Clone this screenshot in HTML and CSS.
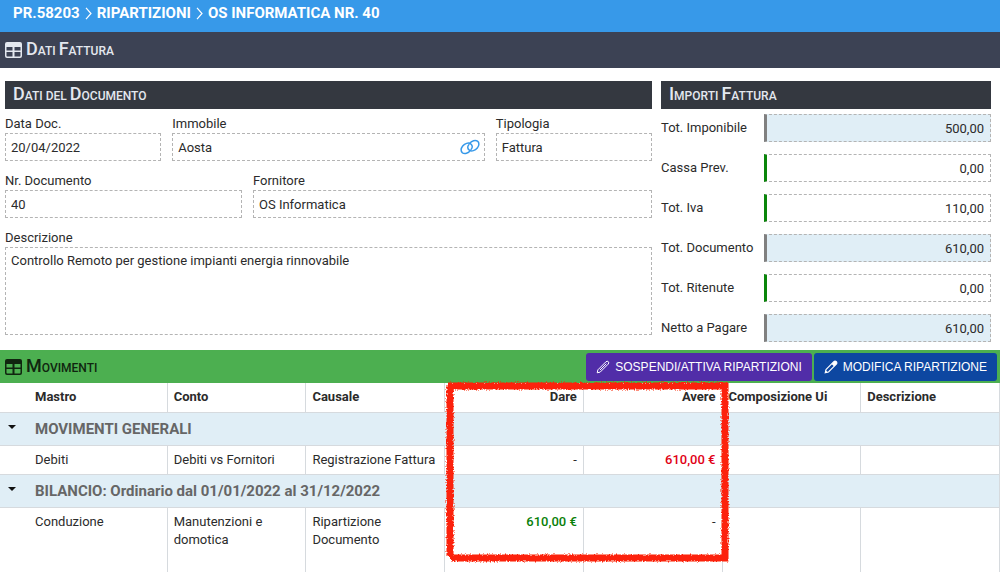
FILE: index.html
```html
<!DOCTYPE html>
<html lang="it">
<head>
<meta charset="utf-8">
<meta name="viewport" content="width=device-width, initial-scale=1">
<title>OS Informatica Nr. 40</title>
<link rel="stylesheet" href="styles.css">
</head>
<body>
<nav class="breadcrumb" aria-label="Percorso">
  <a href="#">PR.58203</a>
  <svg class="chevron" viewBox="0 0 7 13" aria-hidden="true"><path d="M1 .8 6 6.500 1 12.200"/></svg>
  <a href="#">RIPARTIZIONI</a>
  <svg class="chevron" viewBox="0 0 7 13" aria-hidden="true"><path d="M1 .8 6 6.500 1 12.200"/></svg>
  <a href="#">OS INFORMATICA NR. 40</a>
</nav>

<header class="section-bar">
  <svg class="table-icon" viewBox="0 0 17 16" aria-hidden="true"><path fill-rule="evenodd" d="M2 0h13a2 2 0 0 1 2 2v12a2 2 0 0 1-2 2H2a2 2 0 0 1-2-2V2a2 2 0 0 1 2-2zM1.500 5v3.500h6V5zm8 0v3.500h6V5zm-8 5v3.800q0 .7.7.7h5.300V10zm8 0v4.500h5.300q.7 0 .7-.7V10z"/></svg>
  <h1 class="caps"><span class="cap">D</span>ati <span class="cap">F</span>attura</h1>
</header>

<main>
  <form class="invoice">
    <section class="document">
      <h2 class="caps panel-title"><span class="cap">D</span>ati del <span class="cap">D</span>ocumento</h2>
      <div class="row row-main">
        <div class="field"><label for="data">Data Doc.</label><input class="box" id="data" value="20/04/2022"></div>
        <div class="field"><label for="immobile">Immobile</label>
          <div class="box linked"><input class="bare" id="immobile" value="Aosta">
            <button class="link-button" type="button" aria-label="Apri immobile"><svg class="link-icon" viewBox="0 0 20 16" aria-hidden="true"><path d="M10.500 11.300C8.500 14.300 4.500 15.200 2.500 13.800.5 12.300.7 9.500 2.700 7 4.800 4.400 8.500 3.300 10.700 4.800 12.700 6.200 12.600 8.500 11.300 10.100"/><path d="M9.500 4.700C11.500 1.700 15.500.8 17.500 2.200 19.500 3.700 19.300 6.500 17.300 9 15.200 11.600 11.500 12.700 9.300 11.200 7.300 9.800 7.400 7.500 8.700 5.900"/></svg></button>
          </div></div>
        <div class="field"><label for="tipologia">Tipologia</label><input class="box" id="tipologia" value="Fattura"></div>
      </div>
      <div class="row row-supplier">
        <div class="field"><label for="numero">Nr. Documento</label><input class="box" id="numero" value="40"></div>
        <div class="field"><label for="fornitore">Fornitore</label><input class="box" id="fornitore" value="OS Informatica"></div>
      </div>
      <div class="row">
        <div class="field"><label for="descrizione">Descrizione</label><textarea class="box area" id="descrizione">Controllo Remoto per gestione impianti energia rinnovabile</textarea></div>
      </div>
    </section>

    <section class="amounts">
      <h2 class="caps panel-title"><span class="cap">I</span>mporti <span class="cap">F</span>attura</h2>
      <div class="amount-list">
        <div class="amount"><label for="imponibile">Tot. Imponibile</label><input class="box number total" id="imponibile" value="500,00" readonly></div>
        <div class="amount"><label for="cassa">Cassa Prev.</label><input class="box number" id="cassa" value="0,00"></div>
        <div class="amount"><label for="iva">Tot. Iva</label><input class="box number" id="iva" value="110,00"></div>
        <div class="amount"><label for="totdoc">Tot. Documento</label><input class="box number total" id="totdoc" value="610,00" readonly></div>
        <div class="amount"><label for="ritenute">Tot. Ritenute</label><input class="box number" id="ritenute" value="0,00"></div>
        <div class="amount"><label for="netto">Netto a Pagare</label><input class="box number total" id="netto" value="610,00" readonly></div>
      </div>
    </section>
  </form>

  <section class="movements">
    <header class="section-bar green">
      <svg class="table-icon" viewBox="0 0 17 16" aria-hidden="true"><path fill-rule="evenodd" d="M2 0h13a2 2 0 0 1 2 2v12a2 2 0 0 1-2 2H2a2 2 0 0 1-2-2V2a2 2 0 0 1 2-2zM1.500 5v3.500h6V5zm8 0v3.500h6V5zm-8 5v3.800q0 .7.7.7h5.300V10zm8 0v4.500h5.300q.7 0 .7-.7V10z"/></svg>
      <h2 class="caps"><span class="cap">M</span>ovimenti</h2>
      <div class="actions">
        <button class="action purple" type="button"><svg class="pencil" viewBox="0 0 14 14" aria-hidden="true"><path class="line" d="M1.200 12.800 1.900 9.800 9.800 1.900Q11.200.6 12.300 1.700 13.400 2.800 12.100 4.200L4.200 12.100z"/><path class="line" d="M4 10 10.300 3.700"/></svg>SOSPENDI/ATTIVA RIPARTIZIONI</button>
        <button class="action blue" type="button"><svg class="pencil" viewBox="0 0 14 14" aria-hidden="true"><path class="line" d="M1.200 12.800 2 9.500 9.600 1.900Q11 .5 12.300 1.700 13.500 3 12.100 4.400L4.500 12z"/><path class="solid" d="M7.600 3.900 10 1.500Q11.200.6 12.400 1.600 13.400 2.800 12.500 4L10.100 6.400zM1 13l.7-2.800 2.100 2.100z"/></svg>MODIFICA RIPARTIZIONE</button>
      </div>
    </header>

    <div class="table-wrap">
      <table class="grid">
        <colgroup><col class="toggle-col"><col span="7"></colgroup>
        <thead>
          <tr><th class="toggle-cell"></th><th>Mastro</th><th>Conto</th><th>Causale</th><th class="right">Dare</th><th class="right">Avere</th><th>Composizione Ui</th><th>Descrizione</th></tr>
        </thead>
        <tbody>
          <tr class="group"><td class="toggle-cell"><button class="toggle" type="button" aria-label="Comprimi Movimenti generali"></button></td><th colspan="7">MOVIMENTI GENERALI</th></tr>
          <tr><td class="toggle-cell"></td><td>Debiti</td><td>Debiti vs Fornitori</td><td>Registrazione Fattura</td><td class="right">-</td><td class="right avere">610,00 €</td><td></td><td></td></tr>
          <tr class="group"><td class="toggle-cell"><button class="toggle" type="button" aria-label="Comprimi Bilancio"></button></td><th colspan="7">BILANCIO: Ordinario dal 01/01/2022 al 31/12/2022</th></tr>
          <tr class="tall"><td class="toggle-cell"></td><td>Conduzione</td><td>Manutenzioni e domotica</td><td>Ripartizione Documento</td><td class="right dare">610,00 €</td><td class="right">-</td><td></td><td></td></tr>
        </tbody>
      </table>
      <svg class="marker" viewBox="0 0 284 182" preserveAspectRatio="none" aria-hidden="true">
        <defs><filter id="chalk" x="-5%" y="-5%" width="110%" height="110%">
          <feTurbulence type="fractalNoise" baseFrequency=".73" numOctaves="1" seed="11" result="noise"/>
          <feDisplacementMap in="SourceGraphic" in2="noise" scale="4" xChannelSelector="R" yChannelSelector="G"/>
        </filter></defs>
        <path filter="url(#chalk)" d="M3 5H280V177H6M5 4V175"/>
      </svg>
    </div>
  </section>
</main>
</body>
</html>
```
FILE: styles.css
```css
* { box-sizing: border-box; }

body {
  margin: 0;
  background: #fff;
  color: #2b2b2b;
  font: 13px/18px Roboto, "Liberation Sans", sans-serif;
}

input, textarea, button { font: inherit; color: inherit; }
h1, h2 { margin: 0; }

.breadcrumb {
  display: flex;
  align-items: center;
  gap: 5px;
  height: 32px;
  padding: 0 13px 6px;
  background: #3799e9;
  color: #fff;
  font-size: 15px;
  font-weight: 700;
}
.breadcrumb a { color: inherit; text-decoration: none; }
.chevron { width: 7px; height: 13px; fill: none; stroke: #fff; stroke-width: 1.2; }

.section-bar {
  display: flex;
  align-items: center;
  gap: 4px;
  min-height: 36px;
  padding: 0 3px 0 5px;
  background: #3c4254;
  color: #e4e8ef;
}
.section-bar.green { min-height: 33px; background: #4caf50; color: #10250f; }
.table-icon { width: 17px; height: 16px; fill: currentColor; }

/* Large initials over smaller capitals */
.caps { font-size: 12px; line-height: 24px; font-weight: 500; text-transform: uppercase; }
.cap { font-size: 18px; }

.invoice {
  display: grid;
  grid-template-columns: 647fr 330fr;
  gap: 9px;
  padding: 13px 9px 8px 5px;
}
.panel-title {
  height: 28px;
  padding: 0 8px;
  background: #343840;
  color: #e4e8ef;
  line-height: 26px;
}
.document { display: flex; flex-direction: column; gap: 11px; }
.document .panel-title { margin-bottom: -5px; }
.row { display: grid; gap: 11px; }
.row-main { grid-template-columns: 1fr 2fr 1fr; }
.row-supplier { grid-template-columns: 237fr 399fr; }
.field { display: flex; flex-direction: column; min-width: 0; }

.box {
  width: 100%;
  height: 28px;
  padding: 0 5px;
  border: 1px dashed #b4b4b4;
  border-radius: 0;
  background: #fff;
  outline: 0;
}
.area { display: block; height: 88px; padding: 4px 5px; resize: none; }
.linked { display: flex; align-items: center; padding-right: 4px; }
.bare { flex: 1; min-width: 0; height: 100%; padding: 0; border: 0; background: none; outline: 0; }
.link-button { display: flex; padding: 0; border: 0; background: none; }
.link-icon { width: 20px; height: 16px; fill: none; stroke: #3799e9; stroke-width: 1.5; stroke-linecap: round; }

.amount-list { display: flex; flex-direction: column; gap: 12px; padding-top: 5px; }
.amount { display: grid; grid-template-columns: 103px 1fr; align-items: center; }
.number { border-left: 3px solid #0a860a; padding-right: 6px; text-align: right; }
.total { border-left-color: #808080; background: #e0eef6; }

.actions { display: flex; gap: 2px; margin-left: auto; }
.action {
  display: flex;
  align-items: center;
  gap: 5px;
  height: 28px;
  padding: 0 10px;
  border: 0;
  border-radius: 3px;
  color: #fff;
  font: 12px/18px "Liberation Sans", Arial, sans-serif;
}
.purple { background: #512da8; }
.blue { background: #0d47a1; }
.pencil { width: 14px; height: 14px; }
.line { fill: none; stroke: #fff; stroke-width: 1.1; }
.purple .line { stroke-width: 1; }
.solid { fill: #fff; }

.table-wrap { position: relative; }
.grid { width: 100%; border-collapse: separate; border-spacing: 0; table-layout: fixed; }
.toggle-col { width: 29px; }
.grid th, .grid td {
  height: 29px;
  padding: 5px 6px;
  border-right: 1px solid #d6dade;
  border-bottom: 1px solid #d6dade;
  text-align: left;
  vertical-align: top;
}
.grid thead th { height: 30px; font-weight: 700; }
.grid .right { text-align: right; }
.grid .toggle-cell { padding: 12px 8px 0; border-right: 0; }
.grid .group > * { height: 33px; background: #e0eef6; }
.grid .group th { color: #666; font-size: 15px; padding-top: 7px; }
.grid .tall td { height: 78px; }
.grid .avere { color: #e10016; font-weight: 500; }
.grid .dare { color: #088008; font-weight: 500; }
.toggle {
  display: block;
  width: 8px;
  height: 4px;
  padding: 0;
  border: 0;
  background: #111;
  clip-path: polygon(0 0, 100% 0, 50% 100%);
}
.marker {
  position: absolute;
  top: -2px;
  left: 44.500%;
  width: 28.400%;
  height: 182px;
  overflow: visible;
  fill: none;
  stroke: #fc2408;
  stroke-width: 7;
  pointer-events: none;
}
```
